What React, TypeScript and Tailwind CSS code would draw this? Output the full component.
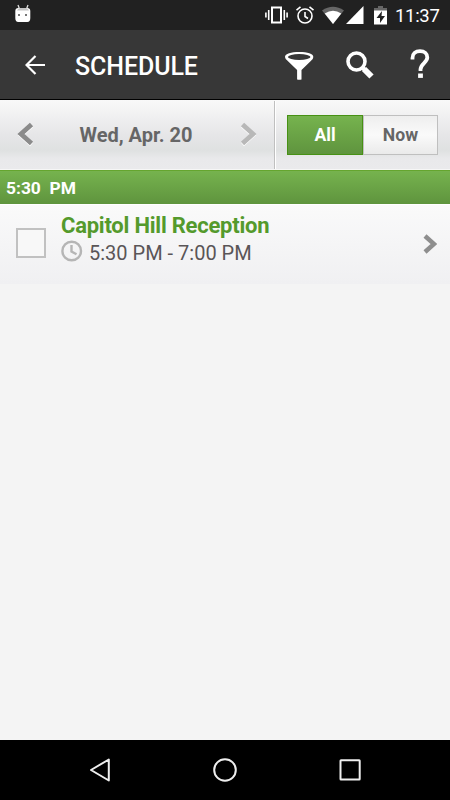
import { useState } from "react";

const StatusBar = () => (
  <div className="h-[30px] bg-[#212121] flex items-center justify-between pl-[15px] pr-[10px] text-white">
    {/* Notification */}
    <svg width="16" height="20" viewBox="0 0 16 20" className="-mt-[2px]">
      <path d="M3 1l1.5 4M13 1l-1.5 4" stroke="#ddd" strokeWidth="1.3" />
      <path d="M0.3 7q0-3 3-3h9q3 0 3 3v7q0 4-3 4h-9q-3 0-3-4z" fill="#fff" />
      <path d="M2 6.5q1-2.5 3-2.5h6q2 0 3 2.5z" fill="#c4c4c4" />
      <path d="M3 10h2v2H3zM10 10h2v2h-2z" fill="#777" />
    </svg>

    <div className="flex items-center">
      {/* Vibrate */}
      <svg width="23" height="20" viewBox="0 0 23 20" fill="none" stroke="#fff" strokeWidth="1.6">
        <rect x="7" y="2.5" width="9" height="15" strokeWidth="2" />
        <path d="M3.7 5v10M19.3 5v10M0.9 7.5v5M22.1 7.5v5" />
      </svg>
      <svg width="20" height="20" viewBox="0 0 20 20" fill="none" stroke="#fff" strokeWidth="1.6" className="ml-[7px]">
        <circle cx="10" cy="11" r="7" />
        <path d="M10 7v4.5l3 2M1.5 5.2l4-3.3M18.5 5.2l-4-3.3" />
      </svg>
      <svg width="22" height="18" viewBox="0 0 22 18" className="ml-[7px]">
        <path d="M0 4.5Q11-3 22 4.5L11 18z" fill="#666" />
        <path d="M2.7 7.5Q11 1.8 19.3 7.5L11 18z" fill="#fff" />
      </svg>
      <svg width="18" height="18" viewBox="0 0 18 18" className="ml-[2px]">
        <path d="M0 18L17.5 0v18z" fill="#fff" />
      </svg>
      <svg width="13" height="19" viewBox="0 0 13 19" className="ml-[10px]">
        <path d="M4 0h5v2h4v3H0V2h4z" fill="#666" />
        <path d="M0 4.5h13v14H0z" fill="#fff" />
        <path d="M8 5L2.5 12H6v5l5-7H7.5z" fill="#212121" />
      </svg>
      <span className="ml-[8px] mt-[2px] text-[18.5px] leading-[28px] w-[45px] whitespace-nowrap tracking-[-0.3px]">11:37</span>
    </div>
  </div>
);

const Header = () => (
  <header className="h-[70px] bg-[#373737] border-b border-black flex items-center pl-[25px] pr-[20px]">
    <button aria-label="Back">
      <svg width="20" height="20" viewBox="0 0 20 20" fill="none" stroke="#fff" strokeWidth="2.2" className="block mt-px">
        <path d="M20 10H1.5M10.5 1L1.5 10l9 9" />
      </svg>
    </button>
    <h1 className="ml-[30px] mt-[4px] text-[25px] font-medium text-white whitespace-nowrap tracking-[-0.1px]">SCHEDULE</h1>
    <div className="ml-auto flex items-center">
      {/* Filter */}
      <svg width="29" height="28" viewBox="0 0 29 28" className="mt-[2px]">
        <path d="M0 4.8C0 2 6 0 14.3 0s14 2 14 4.8c0 2-1.2 3-2.5 4.1L16.5 18v9.5q-2.2.6-4.4 0V18L2.8 8.9C1.5 7.8 0 6.8 0 4.8z" fill="#fff" />
        <ellipse cx="14.2" cy="5" rx="11.3" ry="2.9" fill="#373737" />
      </svg>
      <svg width="28" height="28" viewBox="0 0 28 28" fill="none" stroke="#fff" className="ml-[32px] mt-[1px]">
        <circle cx="10.5" cy="10.5" r="8.5" strokeWidth="3.6" />
        <path d="M16.5 16.5l2.5 2.5" strokeWidth="4" />
        <path d="M18 18l7.5 7.5" strokeWidth="6" />
      </svg>
      <svg width="20" height="30" viewBox="0 0 20 30" fill="none" stroke="#fff" strokeWidth="3.8" className="ml-[36px] -mt-[1px]">
        <path d="M2.5 10.5V9C2.5 4.5 5.500 2.200 10 2.200s7.300 2.500 7.300 6.300c0 5-6.800 6.200-6.800 12V22" />
        <path d="M8.100 26.700h4.800" strokeWidth="4.400" />
      </svg>
    </div>
  </header>
);

const Chevron = ({ left = false, faded = false }: { left?: boolean; faded?: boolean }) => (
  <svg width="17" height="25" viewBox="0 0 17 25" fill="none" className={left ? "-scale-x-100" : ""}>
    <path d="M2.5 3.5L13 13 2.5 22.5" stroke="#fff" strokeWidth="4.5" />
    <path d="M2.5 2.5L13 12 2.5 21.5" stroke={faded ? "#b8b8b8" : "#8b8b8b"} strokeWidth="4.8" />
  </svg>
);

const DateBar = () => {
  const [filter, setFilter] = useState("all");

  return (
    <div className="h-[70px] flex items-center border-b border-[#f6f6f6] bg-[linear-gradient(#f9f9f9,#e6e6e8_50%,#dfe1e1_73%,#e9e9eb_85%,#eaeaec)]">
      <div className="w-[274px] flex items-center justify-between px-[17px]">
        <Chevron left />
        <span className="mr-[2px] mt-px text-[20px] font-bold text-[#666] whitespace-nowrap">Wed, Apr. 20</span>
        <Chevron faded />
      </div>
      <div className="w-[2px] h-[68px] bg-[#bfbfbf] border-r border-white" />
      <div className="ml-[11px] w-[151px] h-10 flex text-[17.6px] font-bold">
        <button
          onClick={() => setFilter("all")}
          aria-pressed={filter === "all"}
          className="w-[76px] border border-[#479114] bg-linear-to-b from-[#76b34e] to-[#5f943e] text-white pt-px"
        >
          All
        </button>
        <button
          onClick={() => setFilter("now")}
          aria-pressed={filter === "now"}
          className="w-[75px] border border-[#bfbfbf] bg-linear-to-b from-[#eee] via-[#fafafa] to-[#eaeaea] text-[#666] pt-px"
        >
          Now
        </button>
      </div>
    </div>
  );
};

const SessionRow = () => (
  <div className="h-20 flex items-center pl-4 pr-[13px] border-t border-white bg-linear-to-b from-[#fafafa] to-[#f0f0f2]">
    <div className="w-[30px] h-[30px] -mt-[4px] border-2 border-[#c1c1c1] bg-[#f8f8f8]" />
    <div className="ml-[15px] -mt-[11px]">
      <h2 className="text-[22px] leading-[28px] font-bold text-[#549a2c] whitespace-nowrap tracking-[-0.23px]">Capitol Hill Reception</h2>
      <div className="flex items-center text-[20px] leading-[27px] text-[#5a5557]">
        <svg width="22" height="22" viewBox="0 0 22 22" fill="none" stroke="#b5b5b5" strokeWidth="2.4" className="mr-[6px] -mt-[4px]">
          <circle cx="10.7" cy="11" r="9.3" />
          <path d="M10.5 5v6.5l5 2.7" />
        </svg>
        <span className="whitespace-nowrap">5:30 PM - 7:00 PM</span>
      </div>
    </div>
    <svg width="14" height="20" viewBox="0 0 14 20" fill="none" stroke="#8e8e8e" strokeWidth="4.5" className="ml-auto -mt-[2px]">
      <path d="M2 2l9 8-9 8" />
    </svg>
  </div>
);

const NavBar = () => (
  <nav className="h-[60px] bg-black flex items-center justify-between px-[88px]">
    <svg width="24" height="24" viewBox="0 0 24 24" fill="none" stroke="#eee" strokeWidth="2">
      <path d="M20.8 1.5v21L3 12z" strokeLinejoin="round" />
    </svg>
    <svg width="24" height="24" viewBox="0 0 24 24" fill="none" stroke="#eee" strokeWidth="2">
      <circle cx="12" cy="12" r="10.8" />
    </svg>
    <svg width="24" height="24" viewBox="0 0 24 24" fill="none" stroke="#eee" strokeWidth="2">
      <rect x="2.5" y="2.2" width="19.2" height="19.2" rx="0.5" />
    </svg>
  </nav>
);

const App = () => (
  <div className="w-[450px] h-[800px] flex flex-col overflow-hidden bg-[#f4f4f4] font-['Roboto',sans-serif]">
    <StatusBar />
    <Header />
    <DateBar />
    <div className="h-[34px] pl-[6px] pt-px flex items-center border-t border-[#65a52f] bg-linear-to-b from-[#76b34e] to-[#5f943e] text-[17.4px] font-bold text-white whitespace-pre">
      5:30  PM
    </div>
    <SessionRow />
    <main className="flex-1 bg-[#f4f4f4]" />
    <NavBar />
  </div>
);

export default App;
